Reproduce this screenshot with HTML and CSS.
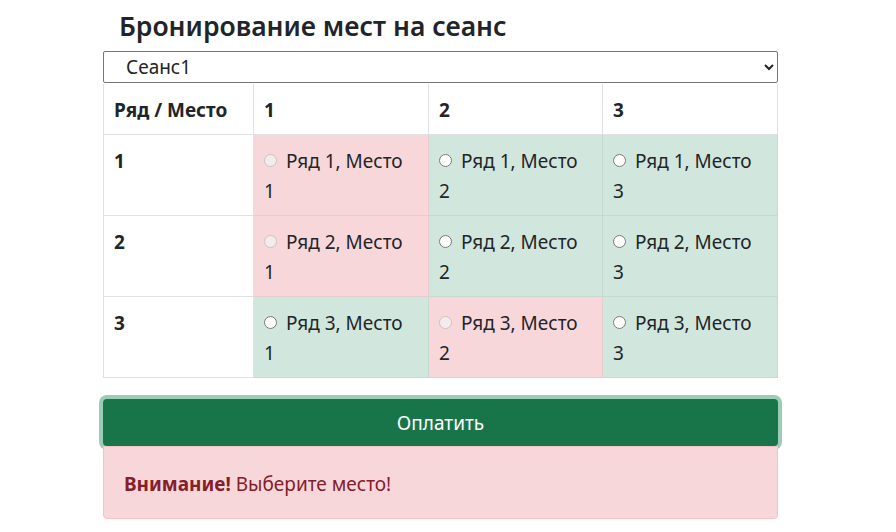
FILE: index.html
```html
<!DOCTYPE html>
<html lang="ru">
<head>
<meta charset="utf-8">
<title>Бронирование мест на сеанс</title>
<link rel="stylesheet" href="styles.css">
</head>
<body>
<div class="container">
  <h2 class="title">Бронирование мест на сеанс</h2>
  <select class="session">
    <option>Сеанс1</option>
  </select>
  <table class="seats">
    <thead>
      <tr><th class="c0">Ряд / Место</th><th class="c1">1</th><th class="c2">2</th><th class="c3">3</th></tr>
    </thead>
    <tbody>
      <tr>
        <th>1</th>
        <td class="busy"><label><input type="radio" name="seat" disabled> Ряд 1, Место 1</label></td>
        <td class="free"><label><input type="radio" name="seat"> Ряд 1, Место 2</label></td>
        <td class="free"><label><input type="radio" name="seat"> Ряд 1, Место 3</label></td>
      </tr>
      <tr>
        <th>2</th>
        <td class="busy"><label><input type="radio" name="seat" disabled> Ряд 2, Место 1</label></td>
        <td class="free"><label><input type="radio" name="seat"> Ряд 2, Место 2</label></td>
        <td class="free"><label><input type="radio" name="seat"> Ряд 2, Место 3</label></td>
      </tr>
      <tr>
        <th>3</th>
        <td class="free"><label><input type="radio" name="seat"> Ряд 3, Место 1</label></td>
        <td class="busy"><label><input type="radio" name="seat" disabled> Ряд 3, Место 2</label></td>
        <td class="free"><label><input type="radio" name="seat"> Ряд 3, Место 3</label></td>
      </tr>
    </tbody>
  </table>
  <button class="pay" type="button">Оплатить</button>
  <div class="alert"><strong>Внимание!</strong> Выберите место!</div>
</div>
</body>
</html>
```
FILE: styles.css
```css
html { font-size: 20px; }
body {
  margin: 0;
  font-family: "Noto Sans", "Open Sans", sans-serif;
  color: #212529;
  background: #fff;
  line-height: 1.5;
}
.container {
  width: 675px;
  margin-left: 103px;
  display: flex;
  flex-direction: column;
}
.title {
  margin: 0;
  padding: 9px 0 7px 16px;
  font-size: 26.5px;
  font-weight: 600;
  line-height: 1.33;
}
.session {
  height: 32px;
  font-family: inherit;
  font-size: 19px;
  padding: 0 0 0 18px;
  border: 1px solid #767676;
  border-radius: 2px;
  background: #fff;
  color: #212529;
}
.seats {
  border-collapse: collapse;
  width: 675px;
  margin-top: 1px;
  table-layout: fixed;
}
.seats th, .seats td {
  border: 1px solid #dee2e6;
  padding: 11px 10px 9px;
  text-align: left;
  vertical-align: top;
  font-size: 19px;
  line-height: 30px;
}
.seats thead th { border-top: none; padding: 11px 10px 9px; }
.seats th { font-weight: 700; }
.c0 { width: 129px; }
.c1 { width: 154px; }
.c2 { width: 153px; }
.busy { background: #f8d7da; border-color: #e8cdd0 !important; }
.free { background: #d1e7dd; border-color: #c4d9cf !important; }
.seats input[type="radio"] {
  margin: 0 4px 0 0;
  width: 13px;
  height: 13px;
  vertical-align: 1px;
}
.pay {
  margin-top: 21px;
  height: 47px;
  border: none;
  border-radius: 4px;
  background: #18754a;
  color: #fff;
  font-family: inherit;
  font-size: 19px;
  box-shadow: 0 0 0 4px rgba(60,153,110,.5);
}
.alert {
  position: relative;
  padding: 22px 20px 19px;
  background: #f8d7da;
  border: 1px solid #f5c2c7;
  border-radius: 0 0 4px 4px;
  color: #842029;
  font-size: 19px;
  line-height: 30px;
}
.alert strong { font-weight: 700; }
```
